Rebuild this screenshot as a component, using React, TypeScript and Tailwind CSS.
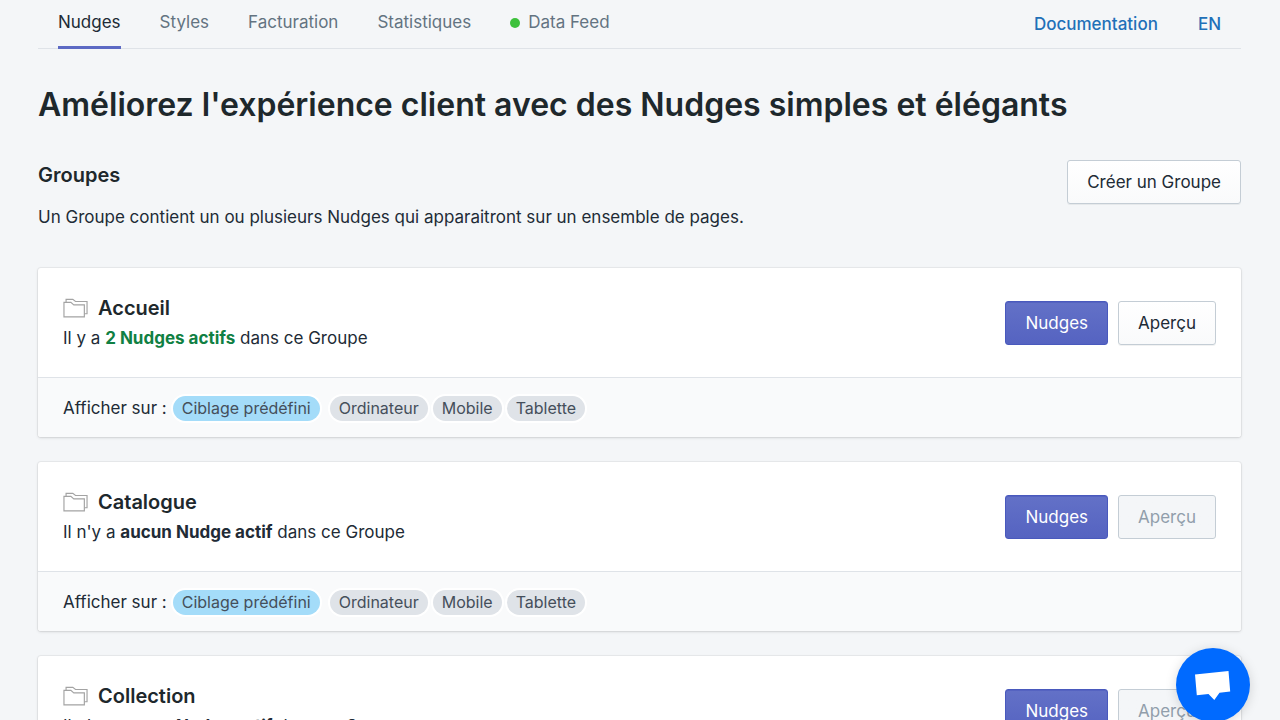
import React from 'react';

type Group = { name: string; active: number };

const groups: Group[] = [
  { name: 'Accueil', active: 2 },
  { name: 'Catalogue', active: 0 },
  { name: 'Collection', active: 0 },
];

const tabs = ['Styles', 'Facturation', 'Statistiques'];
const devices = ['Ordinateur', 'Mobile', 'Tablette'];

function FolderIcon() {
  return (
    <svg
      width="25"
      height="20"
      viewBox="0 0 26 20"
      fill="none"
      stroke="#a3a3a3"
      strokeWidth="1.2"
      aria-hidden="true"
      className="shrink-0"
    >
      <path d="M1 19.2V4.2H8.2L11.2 6.7H22.2V19.2Z" />
      <path d="M3.2 4V1H10.2L13 3.2H25V16H22.4" />
    </svg>
  );
}

function SecondaryButton({ children, disabled = false }: { children: React.ReactNode; disabled?: boolean }) {
  return (
    <button
      type="button"
      disabled={disabled}
      className="h-11 shrink-0 rounded-[3px] border border-[#c4cdd5] bg-linear-to-b from-white to-[#f9fafb] px-[19px] pt-0.5 text-[17px] text-[#212b36] shadow-[0_1px_0_rgba(22,29,37,0.06)] disabled:from-[#f4f6f8] disabled:to-[#f4f6f8] disabled:text-[#919eab] disabled:shadow-none"
    >
      {children}
    </button>
  );
}

function GroupCard({ group }: { group: Group }) {
  const hasActive = group.active > 0;
  return (
    <article className="rounded-[3px] bg-white shadow-[0_0_0_1px_rgba(63,63,68,0.06),0_1px_3px_rgba(63,63,68,0.16)]">
      <div className="flex items-center justify-between px-[25px] py-6">
        <div>
          <h3 className="flex items-center gap-[10px] text-[20px] leading-8 font-semibold text-[#1e282c]">
            <FolderIcon />
            {group.name}
          </h3>
          <p className="text-[17px] leading-[29px] text-[#212b36]">
            {hasActive ? 'Il y a ' : "Il n'y a "}
            {hasActive ? (
              <strong className="font-bold text-[#108043]">{group.active} Nudges actifs</strong>
            ) : (
              <strong className="font-bold">aucun Nudge actif</strong>
            )}
            {' dans ce Groupe'}
          </p>
        </div>
        <div className="flex gap-[10px]">
          <button
            type="button"
            className="h-11 rounded-[3px] border border-[#4959bd] bg-linear-to-b from-[#6371c7] to-[#5563c1] px-[19px] pt-0.5 text-[17px] text-white shadow-[inset_0_1px_0_#5563c1]"
          >
            Nudges
          </button>
          <SecondaryButton disabled={!hasActive}>Aperçu</SecondaryButton>
        </div>
      </div>
      <div className="flex h-[60px] items-center rounded-b-[3px] border-t border-[#dfe3e8] bg-[#f9fafb] px-[25px] pt-0.5 text-[17px] text-[#212b36]">
        <span>Afficher sur :</span>
        <span className="mr-[10px] ml-[6px] rounded-full bg-[#a4dcf9] px-[9px] text-base leading-[25px] text-[#454f5b] ring-2 ring-white">
          Ciblage prédéfini
        </span>
        <div className="flex gap-[5px]">
          {devices.map((device) => (
            <span
              key={device}
              className="rounded-full bg-[#dfe3e8] px-[9px] text-base leading-[25px] text-[#454f5b] ring-2 ring-white"
            >
              {device}
            </span>
          ))}
        </div>
      </div>
    </article>
  );
}

export default function App() {
  return (
    <div className="min-h-screen bg-[#f4f6f8] pr-[39px] pb-6 pl-[38px] font-['Inter',sans-serif] text-[#212b36]">
      <header className="flex h-[49px] items-stretch justify-between border-b border-[#dfe3e8] px-5">
        <nav className="flex gap-[39px] text-[17px] text-[#637381]">
          <a href="#nudges" aria-current="page" className="-mb-px border-b-3 border-[#5c6ac4] leading-[45px] text-[#212b36]">
            Nudges
          </a>
          {tabs.map((tab) => (
            <a key={tab} href={'#' + tab.toLowerCase()} className="leading-[45px]">
              {tab}
            </a>
          ))}
          <a href="#data-feed" className="flex items-center gap-2 self-start leading-[45px]">
            <span className="size-[10px] rounded-full bg-[#3dc13c]" />
            Data Feed
          </a>
        </nav>
        <div className="flex gap-10 text-[17px] leading-[48px] font-medium text-[#1f70b8]">
          <a href="#documentation">Documentation</a>
          <a href="#en" hrefLang="en">EN</a>
        </div>
      </header>

      <main>
        <h1 className="mt-8 text-[32px] leading-[47px] font-semibold text-[#1e282c]">
          Améliorez l'expérience client avec des Nudges simples et élégants
        </h1>

        <section className="mt-8">
          <div className="flex items-start justify-between">
            <div>
              <h2 className="text-[20px] leading-[30px] font-semibold text-[#1e282c]">Groupes</h2>
              <p className="mt-3 text-[17px] leading-[30px]">
                Un Groupe contient un ou plusieurs Nudges qui apparaitront sur un ensemble de pages.
              </p>
            </div>
            <SecondaryButton>Créer un Groupe</SecondaryButton>
          </div>

          <div className="mt-9 flex flex-col gap-[25px]">
            {groups.map((group) => (
              <GroupCard key={group.name} group={group} />
            ))}
          </div>
        </section>
      </main>

      <button
        type="button"
        aria-label="Chat"
        className="fixed right-[30px] -bottom-[2px] flex size-[74px] items-center justify-center rounded-full bg-[#006aff] shadow-[0_2px_12px_rgba(0,0,0,0.15)]"
      >
        <svg width="36" height="30" viewBox="0 0 36 30" fill="#ffffff" aria-hidden="true">
          <path d="M0 4.5L33.5 1L35.2 21.5L24.5 22.7L19.3 30L13.5 24L1.8 25.2Z" />
        </svg>
      </button>
    </div>
  );
}
